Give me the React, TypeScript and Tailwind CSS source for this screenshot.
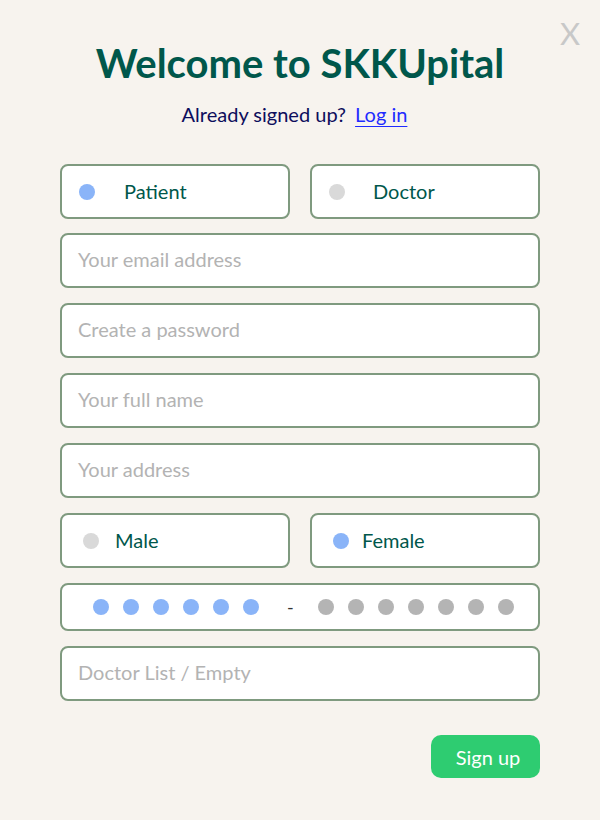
import React from "react";

const Dot = ({ c }: { c: string }) => (
  <span className={`block w-4 h-4 rounded-full ${c}`} />
);

export default function App() {
  const box = "border-2 border-[#7f9a7f] rounded-lg bg-white";
  return (
    <div className="w-[600px] h-[820px] bg-[#f7f3ee] relative" style={{ fontFamily: "Lato, 'Open Sans', sans-serif" }}>
      <div className="absolute left-[560px] top-[18px] text-[31px] leading-none text-[#c8c8c8]">X</div>
      <div className="flex flex-col items-center pt-[37px]">
        <h1 className="text-[40px] font-bold text-[#00574b] leading-[52px]">Welcome to SKKUpital</h1>
        <div className="mt-[12px] pr-[11px] text-[20px] text-[#0d0d5c] leading-[26px]">
          Already signed up?{" "}
          <span className="ml-[4px] text-[#1f2bff] underline underline-offset-[4px] decoration-1">Log in</span>
        </div>
      </div>
      <div className="mx-[60px] mt-[37px] flex flex-col">
        <div className="grid grid-cols-2 gap-5 h-[55px]">
          <div className={`${box} flex items-center pl-[17px]`}>
            <Dot c="bg-[#8ab4f8]" />
            <span className="ml-[29px] text-[20px] text-[#00574b] pb-[2px]">Patient</span>
          </div>
          <div className={`${box} flex items-center pl-[17px]`}>
            <Dot c="bg-[#d9d9d9]" />
            <span className="ml-[28px] text-[20px] text-[#00574b] pb-[2px]">Doctor</span>
          </div>
        </div>
        {["Your email address", "Create a password", "Your full name", "Your address"].map((p, i) => (
          <div key={p} className={`${box} ${i === 0 ? "mt-[14px]" : "mt-[15px]"} h-[55px] flex items-center pl-[16px] pb-[3px] text-[20px] text-[#b3b3b3]`}>
            {p}
          </div>
        ))}
        <div className="grid grid-cols-2 gap-5 h-[55px] mt-[15px]">
          <div className={`${box} flex items-center pl-[21px]`}>
            <Dot c="bg-[#d9d9d9]" />
            <span className="ml-[16px] text-[20px] text-[#00574b] pb-[2px]">Male</span>
          </div>
          <div className={`${box} flex items-center pl-[21px]`}>
            <Dot c="bg-[#8ab4f8]" />
            <span className="ml-[13px] text-[20px] text-[#00574b] pb-[2px]">Female</span>
          </div>
        </div>
        <div className={`${box} mt-[15px] h-[48px] flex items-center pl-[31px]`}>
          <div className="flex gap-[14px]">
            {[0, 1, 2, 3, 4, 5].map((i) => (
              <Dot key={i} c="bg-[#8ab4f8]" />
            ))}
          </div>
          <span className="ml-[28px] mr-[24px] text-[18px] text-[#333]">-</span>
          <div className="flex gap-[14px]">
            {[0, 1, 2, 3, 4, 5, 6].map((i) => (
              <Dot key={i} c="bg-[#b4b4b4]" />
            ))}
          </div>
        </div>
        <div className={`${box} mt-[15px] h-[55px] flex items-center pl-[16px] pb-[3px] text-[20px] text-[#b3b3b3]`}>
          Doctor List / Empty
        </div>
        <div className="flex justify-end mt-[34px]">
          <button className="w-[109px] h-[43px] rounded-[10px] bg-[#2ecc71] text-white text-[20px] pl-[5px]">Sign up</button>
        </div>
      </div>
    </div>
  );
}
